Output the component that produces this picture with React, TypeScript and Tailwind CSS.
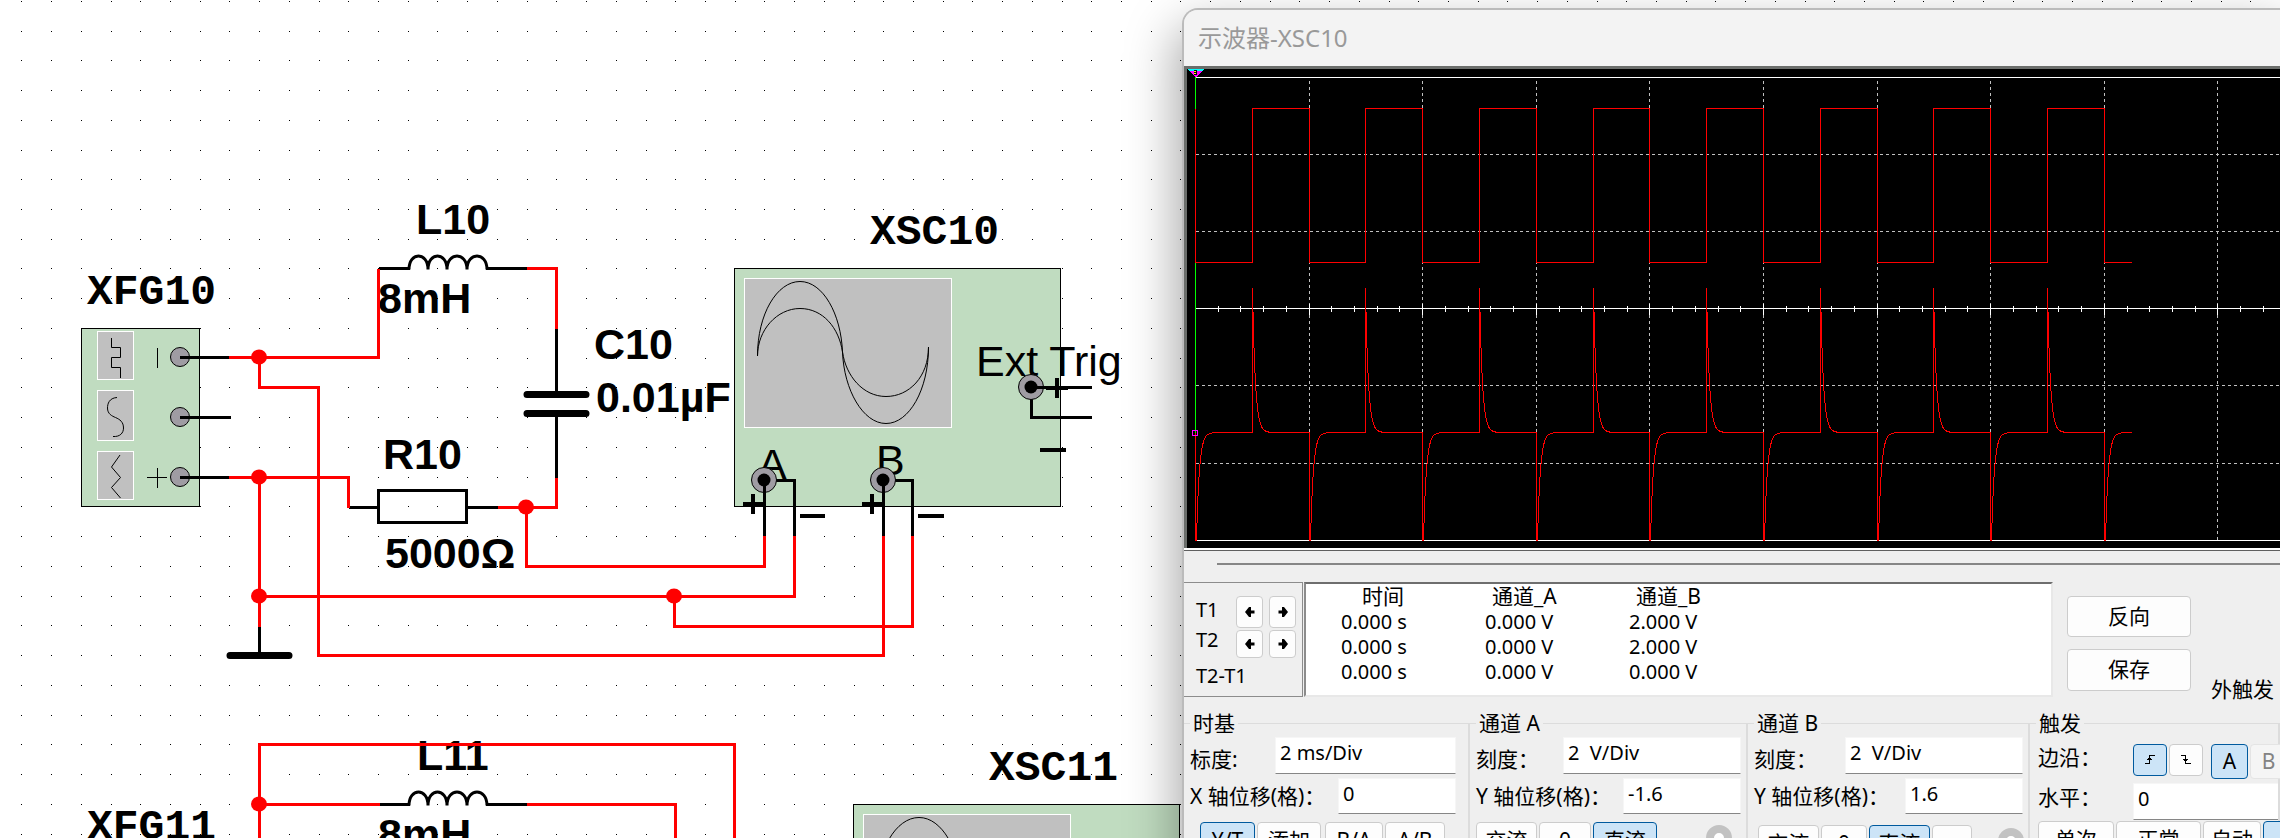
import type { ReactNode } from "react";

const RED = "#ff0000";

/* ---------- Schematic canvas ---------- */

const gridDots = (() => {
  let d = "";
  for (let r = 0; r < 40; r++) {
    for (let c = -1; c < 110; c++) {
      d += `M${Math.floor(21.9 + 29.72 * c)} ${Math.floor(1.3 + 29.74 * r)}h1v1h-1z`;
    }
  }
  return d;
})();

function Wire({ d }: { d: string }) {
  return <path d={d} fill="none" stroke={RED} strokeWidth="3" strokeLinecap="square" shapeRendering="crispEdges" />;
}

function Lead({ d, w = 3 }: { d: string; w?: number }) {
  return <path d={d} fill="none" stroke="#000" strokeWidth={w} shapeRendering="crispEdges" />;
}

function Inductor({ y }: { y: number }) {
  return (
    <g fill="none" stroke="#000" strokeWidth="3" transform={`translate(0 ${y})`}>
      <path d="M379 0H410M486 0H527" shapeRendering="crispEdges" />
      <path d="M409 1C409 -17 428 -17 428 1M428 1C428 -17 447 -17 447 1M447 1C447 -17 467 -17 467 1M467 1C467 -17 487 -17 487 1" />
    </g>
  );
}

function Port({ x, y }: { x: number; y: number }) {
  return (
    <g>
      <circle cx={x} cy={y} r="12.5" fill="#9f9ca3" stroke="#000" />
      <circle cx={x} cy={y} r="6.5" fill="#000" />
    </g>
  );
}

function ScopeSymbol({ dx, dy }: { dx: number; dy: number }) {
  return (
    <g transform={`translate(${dx} ${dy})`}>
      <rect x="734.5" y="268.5" width="326" height="238" fill="#c0dcc0" stroke="#000" />
      <rect x="744.5" y="278.5" width="207" height="149" fill="#c0c0c0" stroke="#fff" />
      <g fill="none" stroke="#000">
        <path d="M757.5 356C757.5 314 777 281.500 800 281.500S841 314 842.500 352S863 423.500 886 423.500S928.500 390 928.500 347" />
        <path d="M757.500 356C757.500 330 777 308.500 800 308.500S839 328 842.500 352S863 396.500 886 396.500S928.500 377 928.500 347" />
      </g>
    </g>
  );
}

function Schematic() {
  const junctions = [
    [259, 357], [259, 477], [259, 596], [526, 507], [674, 596], [259, 804],
  ];
  return (
    <svg className="block h-full w-full" role="img" aria-label="Schematic">
      <path d={gridDots} fill="#000" shapeRendering="crispEdges" />

      {/* function generator */}
      <rect x="81.500" y="328.500" width="118" height="178" fill="#c0dcc0" stroke="#000" />
      <g fill="#c0c0c0" stroke="#fff">
        <rect x="97.500" y="331.500" width="36" height="48" />
        <rect x="97.500" y="390.500" width="36" height="50" />
        <rect x="97.500" y="451.500" width="36" height="48" />
      </g>
      <g fill="none" stroke="#000">
        <path d="M111.500 338V347.500H120.500V357.500H111.500V367.500H120.500V378" />
        <path d="M117 397.500C109 398 107.500 404 107.500 408C107.500 414 112 416 115.500 417.500C120 419.500 123.500 422 123.500 428C123.500 433 120 437 113 436.500" />
        <path d="M120 455L111.500 467L120.500 477.500L111.500 487.500L120.500 498" />
        <path d="M157.500 348V368M157.500 468V488M147 477.500H167" />
      </g>
      {[357, 417, 477].map((y) => (
        <circle key={y} cx="180" cy={y} r="9.500" fill="#9f9ca3" stroke="#000" />
      ))}
      <Lead d="M180 357.500H230M180 417.500H231M180 477.500H230" />

      <ScopeSymbol dx={0} dy={0} />
      <ScopeSymbol dx={119} dy={536} />

      {/* component labels */}
      <g className="[font-family:'Liberation_Sans',Arial,sans-serif] text-[43px] font-bold">
        <text x="416" y="234">L10</text>
        <text x="378" y="313">8mH</text>
        <text x="383" y="469">R10</text>
        <text x="385" y="568">5000Ω</text>
        <text x="594" y="359">C10</text>
        <text x="596" y="412">0.01µF</text>
        <text x="417" y="770">L11</text>
        <text x="378" y="849">8mH</text>
      </g>
      <g className="[font-family:'Courier_New','Liberation_Mono',monospace] text-[43px] font-bold">
        <text x="87" y="304">XFG10</text>
        <text x="870" y="244">XSC10</text>
        <text x="87" y="839">XFG11</text>
        <text x="989" y="780">XSC11</text>
      </g>
      <g className="[font-family:'Liberation_Sans',Arial,sans-serif] text-[43px]">
        <text x="976" y="376">Ext Trig</text>
        <text x="758" y="479">A</text>
        <text x="876" y="475">B</text>
      </g>

      {/* passive parts */}
      <Inductor y={268.5} />
      <Inductor y={804.5} />
      <Lead d="M556.500 328V394M556.500 414V478M349 507.500H378M468 507.500H498M259.500 626V655" />
      <path d="M378.500 490.500H466.500V522.500H378.500Z" fill="none" stroke="#000" strokeWidth="3" shapeRendering="crispEdges" />
      <path d="M527 394.500H586M527 413.500H586M230 655.500H289" stroke="#000" strokeWidth="7" strokeLinecap="round" />

      {/* wires */}
      <Wire d="M230 357.500H378.500V270M259.500 357.500V387.500H318.500V655.500H883.500V537" />
      <Wire d="M230 477.500H348.500V506M259.500 477.500V625" />
      <Wire d="M528 268.500H556.500V327M556.500 479V507.500H499M526.500 507.500V566.500H764.500V537" />
      <Wire d="M259.500 596.500H794.500V537M674.500 596.500V626.500H912.500V537" />
      <Wire d="M259.500 860V744.500H734.500V860M259.500 804.500H378M528 804.500H675.500V860" />
      {junctions.map(([x, y]) => (
        <ellipse key={`${x}-${y}`} cx={x} cy={y} rx="8" ry="7.500" fill={RED} />
      ))}

      {/* oscilloscope terminals */}
      <Lead d="M1031 387.500H1092M1031.500 387V417.500H1092" />
      <Lead d="M764.500 480V536M764 480.500H794.500V536M883.500 480V536M883 480.500H912.500V536" />
      <Port x={1031} y={387} />
      <Port x={764} y={480} />
      <Port x={883} y={480} />
      <Lead d="M1031 387.500H1046M764.500 480V494M883.500 480V494" />
      <Lead
        w={4}
        d="M1046 388H1068M1057 378V398M1040 450H1066M743 504H764M753 494V514M862 504H884M872 494V514M800 516H825M918 516H944"
      />
    </svg>
  );
}

/* ---------- Oscilloscope trace ---------- */

const X0 = 8.5;
const DIV = 113.6;
const BASE = 363.5;
const SWING = 154;
const TAU = 2.84;
const HALF = DIV / 2;
const END_X = 945;
const edges = Array.from({ length: 17 }, (_, i) => X0 + i * HALF);

const squarePath = (() => {
  let d = `M${X0} 39.500V193.500`;
  for (let i = 1; i < edges.length; i++) {
    d += `H${Math.floor(edges[i]) + 0.5}V${i % 2 ? 39.5 : 193.5}`;
  }
  return `${d}H${END_X}`;
})();

const pulsePath = (() => {
  let d = `M${X0} ${BASE}`;
  edges.forEach((edge, i) => {
    const x = Math.floor(edge) + 0.5;
    const up = i % 2 === 1;
    d += `H${x}V${up ? 219 : 471}`;
    const amp = up ? -144 : SWING;
    for (let t = 0; t <= 18; t += 0.5) {
      const y = Math.min(471, BASE + amp * Math.exp(-t / TAU));
      d += `L${x + t} ${y.toFixed(1)}`;
    }
    d += `V${BASE}`;
  });
  return `${d}H${END_X}`;
})();

const ticks = Array.from({ length: 90 }, (_, i) => {
  const x = Math.floor(X0 + (i + 1) * (DIV / 5)) + 0.5;
  return (i + 1) % 5 === 0 ? `M${x} 235V246` : `M${x} 237V243`;
}).join("");

const columns = Array.from({ length: 18 }, (_, i) => `M${Math.floor(X0 + (i + 1) * DIV) + 0.5} 12V471`).join("");

function TraceDisplay() {
  return (
    <div className="border-t-3 border-l-3 border-[#6b6e6b] bg-black">
      <svg className="block h-[479px] w-full" role="img" aria-label="Trace" shapeRendering="crispEdges">
        <g stroke="#c0c0c0" strokeDasharray="3 3">
          <path d={columns} />
          {[85.5, 162.5, 316.5, 394.5].map((y) => (
            <line key={y} x1="9" x2="100%" y1={y} y2={y} />
          ))}
        </g>
        <g stroke="#fff">
          <line x1="8" x2="100%" y1="8.500" y2="8.500" />
          <line x1="8" x2="100%" y1="239.500" y2="239.500" />
          <line x1="8" x2="100%" y1="471.500" y2="471.500" />
          <path d={ticks} />
        </g>
        <path d="M8.500 8V364" stroke="#00ff00" />
        <g fill="none" stroke={RED}>
          <path d={squarePath} />
          <path d={pulsePath} />
        </g>
        <circle cx="8" cy="364" r="3" fill="none" stroke="#ff00ff" />
        <path d="M0 0H17L15 2H2Z" fill="#00ffff" />
        <path d="M2 2H15L9 8H8Z" fill="#ff00ff" />
        <path d="M7 1H10V6H7Z" fill="#000" />
        <path d="M7 2H9V3H7ZM7 4H9V5H7Z" fill="#ffff00" />
      </svg>
      <div className="-ml-[3px] h-[3px] border-b border-[#5f5f5f] bg-white" />
    </div>
  );
}

/* ---------- Controls ---------- */

function Btn({
  children, className = "", active = false, disabled = false, label,
}: { children?: ReactNode; className?: string; active?: boolean; disabled?: boolean; label?: string }) {
  const tone = active ? "border-[#005a9e] bg-[#cce4f7]" : "border-[#cccccc] bg-[#fdfdfd]";
  return (
    <button
      type="button"
      aria-label={label}
      aria-pressed={active}
      disabled={disabled}
      className={`flex shrink-0 items-center justify-center rounded-[4px] border ${tone} disabled:border-[#e4e4e4] disabled:bg-[#f5f5f5] disabled:text-[#838383] ${className}`}
    >
      {children}
    </button>
  );
}

function Arrow({ flip = false }: { flip?: boolean }) {
  return (
    <svg width="10" height="10" viewBox="0 0 10 10" className={flip ? "rotate-180" : ""} aria-hidden="true">
      <path d="M0 5L4 0H6V3.500H9.500V6.500H6V10H4Z" fill="#000" />
    </svg>
  );
}

function Edge({ falling = false }: { falling?: boolean }) {
  return (
    <svg width="10" height="10" viewBox="0 0 10 10" fill="none" stroke="#000" shapeRendering="crispEdges" aria-hidden="true">
      {falling ? <path d="M0 .5H4.500V8.500H10M2 4.500H7M3 5.500H6" /> : <path d="M0 8.500H4.500V.5H10M2 4.500H7M3 3.500H6" />}
    </svg>
  );
}

function Field({
  id, label, value, labelClass, inputClass, labelPad = "pt-1.5",
}: { id: string; label: string; value: string; labelClass: string; inputClass: string; labelPad?: string }) {
  return (
    <div className="flex items-center">
      <label htmlFor={id} className={`shrink-0 whitespace-nowrap leading-7 ${labelPad} ${labelClass}`}>
        {label}
      </label>
      <input
        id={id}
        defaultValue={value}
        className={`shrink-0 rounded-none border border-[#f6f6f6] border-b-[#868686] bg-white px-1 pb-1.5 text-xl outline-none ${inputClass}`}
      />
    </div>
  );
}

function Group({ title, children, className = "" }: { title: string; children: ReactNode; className?: string }) {
  return (
    <fieldset className={`min-w-0 border-t border-r-2 border-[#dcdcdc] ${className}`}>
      <legend className="ml-1.5 px-[3px] leading-7">{title}</legend>
      {children}
    </fieldset>
  );
}

function Ring() {
  return <span className="ml-auto size-[26px] shrink-0 rounded-full border-8 border-[#c2c2c2] bg-white" />;
}

function Cursors() {
  return (
    <div className="grid h-[115px] w-[119px] shrink-0 grid-cols-[34px_27px_27px] content-start gap-x-[6px] gap-y-[2px] border border-l-0 border-[#8c8c8c] pt-[13px] pl-3 text-xl">
      <span className="leading-7">T1</span>
      <Btn label="T1 left" className="h-8"><Arrow /></Btn>
      <Btn label="T1 right" className="h-8"><Arrow flip /></Btn>
      <span className="leading-5">T2</span>
      <Btn label="T2 left" className="h-7"><Arrow /></Btn>
      <Btn label="T2 right" className="h-7"><Arrow flip /></Btn>
      <span className="whitespace-nowrap leading-8">T2-T1</span>
    </div>
  );
}

const readings = [
  ["0.000 s", "0.000 V", "2.000 V"],
  ["0.000 s", "0.000 V", "2.000 V"],
  ["0.000 s", "0.000 V", "0.000 V"],
];

function Readings() {
  return (
    <div className="ml-px h-[115px] w-[749px] shrink-0 border-2 border-t-[#6e6e6e] border-r-[#e8e8e8] border-b-[#e8e8e8] border-l-[#8c8c8c] bg-white">
      <table className="ml-[35px] table-fixed border-collapse text-left leading-[25px]">
        <thead>
          <tr>
            <th className="w-36 p-0 pl-[21px] font-normal">时间</th>
            <th className="w-36 p-0 pl-[7px] font-normal">通道_A</th>
            <th className="w-36 p-0 pl-[7px] font-normal">通道_B</th>
          </tr>
        </thead>
        <tbody className="text-xl leading-[25px]">
          {readings.map((row, i) => (
            <tr key={i}>
              {row.map((cell, j) => (
                <td key={j} className="p-0">{cell}</td>
              ))}
            </tr>
          ))}
        </tbody>
      </table>
    </div>
  );
}

function ScopeWindow() {
  return (
    <section
      aria-label="示波器-XSC10"
      className="absolute top-2 right-0 left-[1182px] overflow-hidden rounded-tl-[16px] border-t-2 border-l-2 border-[#bbbbbb] bg-[#efefef] text-[21px] text-black shadow-[0_24px_50px_6px_rgba(0,0,0,0.34)]"
    >
      <header className="flex h-14 items-center bg-[#f3f3f3] pl-3.5">
        <h1 className="text-2xl text-[#999999]">示波器-XSC10</h1>
      </header>

      <TraceDisplay />

      <div className="mt-3 mb-[17px] ml-[33px] h-[2px] bg-[#868686]" />

      <div className="flex items-start">
        <Cursors />
        <Readings />
        <div className="mt-3.5 ml-3.5 flex flex-col gap-3">
          <Btn className="h-[41px] w-[124px]">反向</Btn>
          <Btn className="h-[42px] w-[124px]">保存</Btn>
        </div>
        <span className="mt-[91px] ml-5 whitespace-nowrap leading-8">外触发</span>
      </div>

      <div className="grid grid-cols-[286px_278px_282px_minmax(0,1fr)] pt-1">
        <Group title="时基">
          <div className="flex flex-col gap-1 pl-1.5">
            <Field id="tb-scale" label="标度:" value="2 ms/Div" labelClass="w-[85px]" inputClass="h-[37px] w-[181px]" />
            <Field id="tb-pos" label="X 轴位移(格)：" value="0" labelPad="pb-0" labelClass="w-[148px]" inputClass="h-9 w-[118px]" />
          </div>
          <div className="mt-2 flex gap-0.5 pl-4">
            <Btn active className="h-[38px] w-[55px]">Y/T</Btn>
            <Btn className="h-[38px] w-16">添加</Btn>
            <Btn className="ml-0.5 h-[38px] w-[58px]">B/A</Btn>
            <Btn className="h-[38px] w-[60px]">A/B</Btn>
          </div>
        </Group>

        <Group title="通道 A">
          <div className="flex flex-col gap-1 pl-1.5">
            <Field id="a-scale" label="刻度：" value="2  V/Div" labelClass="w-[87px]" inputClass="h-[37px] w-[178px]" />
            <Field id="a-pos" label="Y 轴位移(格)：" value="-1.6" labelPad="pb-0" labelClass="w-[147px]" inputClass="h-9 w-[118px]" />
          </div>
          <div className="mt-2 flex gap-0.5 pr-3.5 pl-1.5">
            <Btn className="h-[38px] w-[61px]">交流</Btn>
            <Btn className="h-[38px] w-[52px]">0</Btn>
            <Btn active className="h-[38px] w-16">直流</Btn>
            <div className="flex grow pt-[3px]"><Ring /></div>
          </div>
        </Group>

        <Group title="通道 B">
          <div className="flex flex-col gap-1 pl-1.5">
            <Field id="b-scale" label="刻度：" value="2  V/Div" labelClass="w-[91px]" inputClass="h-[37px] w-[178px]" />
            <Field id="b-pos" label="Y 轴位移(格)：" value="1.6" labelPad="pb-0" labelClass="w-[151px]" inputClass="h-9 w-[118px]" />
          </div>
          <div className="mt-[11px] flex gap-0.5 pr-1 pl-2.5">
            <Btn className="h-[38px] w-[61px]">交流</Btn>
            <Btn className="h-[38px] w-[46px]">0</Btn>
            <Btn active className="h-[38px] w-[61px]">直流</Btn>
            <Btn className="h-[38px] w-10">-</Btn>
            <div className="flex grow pt-[3px]"><Ring /></div>
          </div>
        </Group>

        <Group title="触发" className="border-r-0">
          <div className="flex items-start pl-2">
            <span className="w-[95px] shrink-0 pt-1.5 leading-7">边沿：</span>
            <div className="flex gap-0.5 pt-[7px]">
              <Btn active label="上升沿" className="h-8 w-[34px]"><Edge /></Btn>
              <Btn label="下降沿" className="h-8 w-[34px]"><Edge falling /></Btn>
              <Btn active className="ml-1.5 h-[35px] w-[37px]">A</Btn>
              <Btn disabled className="h-[35px] w-[37px]">B</Btn>
            </div>
          </div>
          <div className="mt-1 flex items-start pl-2">
            <label htmlFor="trig-level" className="w-[95px] shrink-0 leading-7">水平：</label>
            <input
              id="trig-level"
              defaultValue="0"
              className="h-[37px] min-w-0 grow rounded-none border border-r-0 border-[#f6f6f6] border-b-[#868686] bg-white px-1 pb-1.5 text-xl outline-none"
            />
          </div>
          <div className="mt-px flex gap-0.5 pl-2">
            <Btn className="h-[38px] w-[76px]">单次</Btn>
            <Btn className="h-[38px] w-[85px]">正常</Btn>
            <Btn className="h-[38px] w-[58px]">自动</Btn>
            <Btn active label="无" className="h-[38px] w-[58px]" />
          </div>
        </Group>
      </div>
    </section>
  );
}

export default function App() {
  return (
    <main className="relative h-screen w-full overflow-hidden bg-white [font-family:'Noto_Sans','Noto_Sans_CJK_SC',sans-serif]">
      <Schematic />
      <ScopeWindow />
    </main>
  );
}
